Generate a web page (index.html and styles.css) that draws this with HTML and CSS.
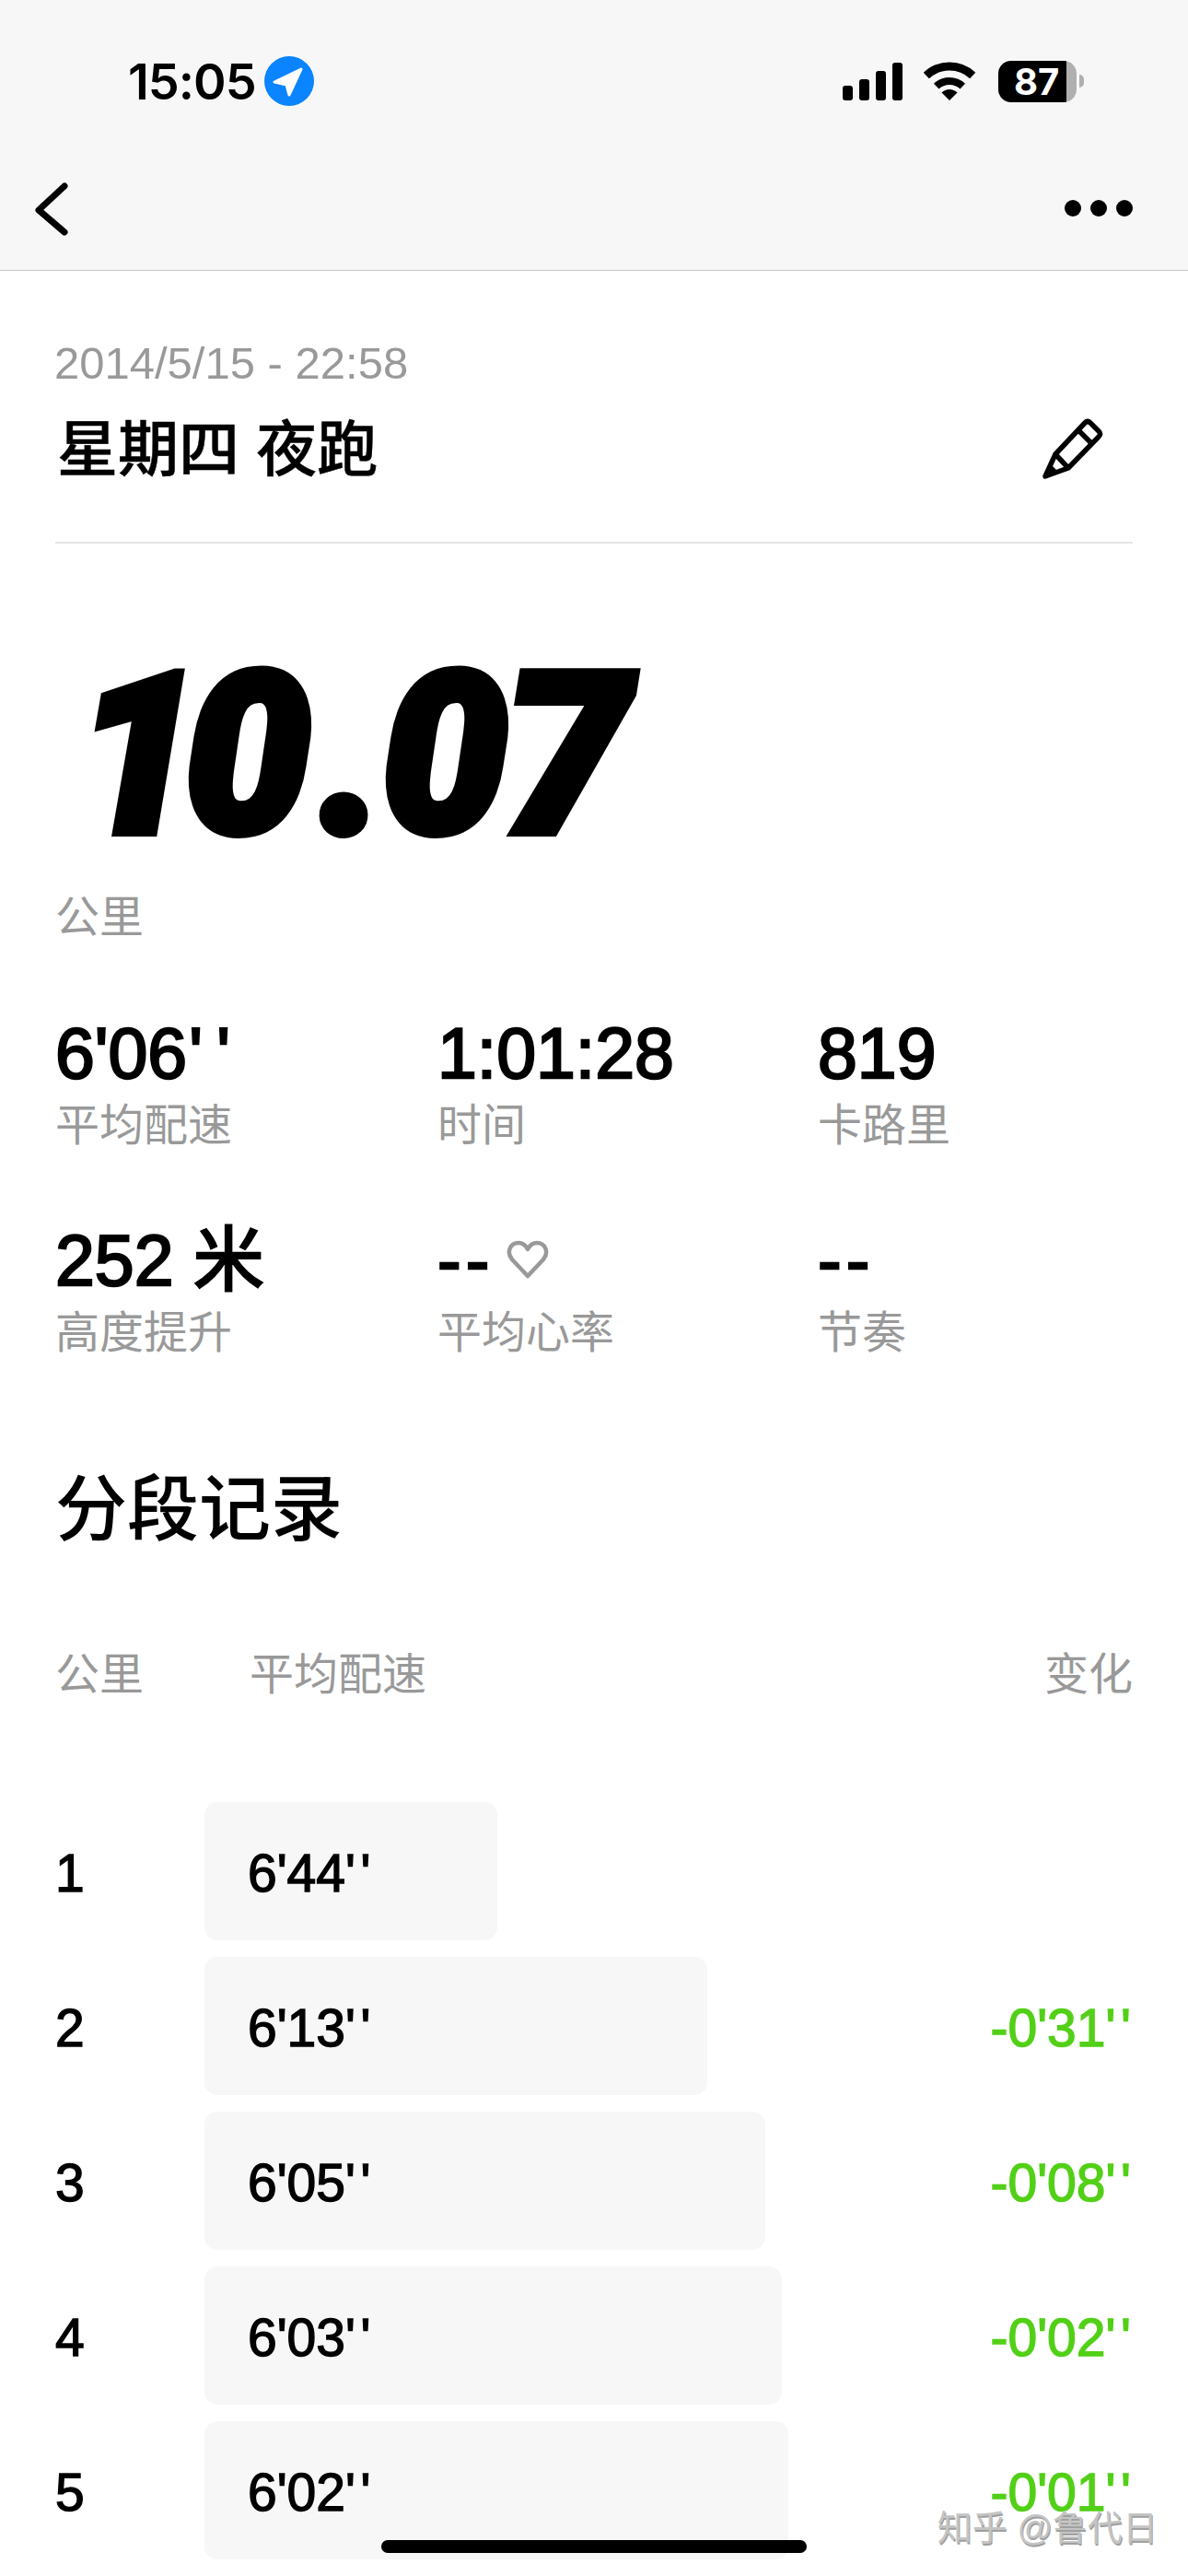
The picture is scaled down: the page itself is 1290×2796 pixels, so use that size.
FILE: index.html
```html
<!DOCTYPE html>
<html lang="zh-CN">
<head>
    <meta charset="UTF-8">
    <meta name="viewport" content="width=device-width, initial-scale=1.0">
    <title>星期四 夜跑</title>
    <link rel="stylesheet" href="styles.css">
</head>
<body>
<div class="page">

    <div class="topbar">
        <div class="status">
            <div class="status-left">
                <span class="clock">15:05</span>
                <svg class="locate" width="54" height="54" viewBox="0 0 54 54">
                    <circle cx="27" cy="27" r="27" fill="#0a84ff"/>
                    <path d="M40 14 L11 28 L24 31 L27 42 Z" fill="#fff" stroke="#fff" stroke-width="3" stroke-linejoin="round"/>
                </svg>
            </div>
            <div class="status-right">
                <svg width="65" height="41" viewBox="0 0 65 41">
                    <rect x="0" y="25" width="11" height="16" rx="3"/>
                    <rect x="18" y="18" width="11" height="23" rx="3"/>
                    <rect x="36" y="9" width="11" height="32" rx="3"/>
                    <rect x="54" y="0" width="11" height="41" rx="3"/>
                </svg>
                <svg width="58" height="44" viewBox="0 0 58 44">
                    <path d="M2.8 16 A37 37 0 0 1 53.2 16" fill="none" stroke="#000" stroke-width="9"/>
                    <path d="M13.7 27.6 A21 21 0 0 1 42.3 27.6" fill="none" stroke="#000" stroke-width="8"/>
                    <path d="M28 43 L19.5 34.5 A12 12 0 0 1 36.5 34.5 Z"/>
                </svg>
                <div class="battery">
                    <div class="battery-body">87</div>
                    <div class="battery-tip"></div>
                </div>
            </div>
        </div>
        <div class="nav">
            <svg width="44" height="60" viewBox="0 0 44 60">
                <path d="M37 6 L9 32 L37 56" fill="none" stroke="#000" stroke-width="7" stroke-linecap="round" stroke-linejoin="round"/>
            </svg>
            <div class="dots"><i></i><i></i><i></i></div>
        </div>
    </div>

    <div class="content">
        <div class="date">2014/5/15 - 22:58</div>
        <div class="title-row">
            <h1 class="title">星期四 夜跑</h1>
            <svg class="edit" width="100" height="100" viewBox="0 0 100 100">
                <path d="M25 77 L36 53 L68 19 Q71 16 74 19 L83 28 Q86 31 83 34 L50 68 Z M36 53 L50 68 M61 27 L75 41" fill="none" stroke="#000" stroke-width="5.5" stroke-linejoin="round"/>
                <path d="M25 77 L31 64 L38 71 Z"/>
            </svg>
        </div>

        <div class="distance"><span class="dist-one">1</span><span class="dist-zero">0</span>.07</div>
        <div class="distance-unit">公里</div>

        <div class="stats">
            <div class="stat">
                <div class="stat-value">6'06<span class="sec">'</span>'</div>
                <div class="label">平均配速</div>
            </div>
            <div class="stat">
                <div class="stat-value">1:01:28</div>
                <div class="label">时间</div>
            </div>
            <div class="stat">
                <div class="stat-value">819</div>
                <div class="label">卡路里</div>
            </div>
            <div class="stat">
                <div class="stat-value">252 米</div>
                <div class="label">高度提升</div>
            </div>
            <div class="stat">
                <div class="stat-value"><span class="dash">--</span><svg class="heart" width="46" height="42" viewBox="0 0 46 42">
                        <path d="M23 39 L6 21 C-1 12 5 3 13 3 C18 3 21 6 23 10 C25 6 28 3 33 3 C41 3 47 12 40 21 Z" fill="none" stroke="#999" stroke-width="4.5" stroke-linejoin="round"/>
                    </svg></div>
                <div class="label">平均心率</div>
            </div>
            <div class="stat">
                <div class="stat-value"><span class="dash">--</span></div>
                <div class="label">节奏</div>
            </div>
        </div>

        <h2 class="section-title">分段记录</h2>

        <div class="splits-head">
            <span class="head-km">公里</span>
            <span>平均配速</span>
            <span class="head-change">变化</span>
        </div>

        <div class="splits">
            <div class="split">
                <span class="split-km">1</span>
                <div class="split-bar" style="width: 318px">6'44<span class="sec">'</span>'</div>
            </div>
            <div class="split">
                <span class="split-km">2</span>
                <div class="split-bar" style="width: 546px">6'13<span class="sec">'</span>'</div>
                <span class="split-change">-0'31<span class="sec">'</span>'</span>
            </div>
            <div class="split">
                <span class="split-km">3</span>
                <div class="split-bar" style="width: 609px">6'05<span class="sec">'</span>'</div>
                <span class="split-change">-0'08<span class="sec">'</span>'</span>
            </div>
            <div class="split">
                <span class="split-km">4</span>
                <div class="split-bar" style="width: 627px">6'03<span class="sec">'</span>'</div>
                <span class="split-change">-0'02<span class="sec">'</span>'</span>
            </div>
            <div class="split">
                <span class="split-km">5</span>
                <div class="split-bar" style="width: 634px">6'02<span class="sec">'</span>'</div>
                <span class="split-change">-0'01<span class="sec">'</span>'</span>
            </div>
        </div>
    </div>

    <div class="watermark">知乎 @鲁代日</div>
    <div class="home-bar"></div>
</div>
</body>
</html>
```

FILE: styles.css
```css
body {
    margin: 0;
    background-color: #fff;
    color: #000;
    font-family: "Liberation Sans", "Noto Sans CJK SC", sans-serif;
}
.page {
    position: relative;
    height: 2796px;
    overflow: hidden;
}
.topbar {
    height: 293px;
    background-color: #f7f7f7;
    border-bottom: 1px solid #c8c8c8;
}
.status {
    display: flex;
    justify-content: space-between;
    align-items: center;
    height: 176px;
    padding: 0 113px 0 139px;
}
.status-left {
    display: flex;
    align-items: center;
    gap: 9px;
}
.clock {
    font-family: Inter, sans-serif;
    font-size: 54px;
    font-weight: 600;
    letter-spacing: -1px;
}
.status-right {
    display: flex;
    align-items: center;
    gap: 23px;
}
.battery {
    display: flex;
    align-items: center;
    gap: 3px;
}
.battery-body {
    width: 85px;
    height: 45px;
    padding-left: 17px;
    box-sizing: border-box;
    border-radius: 14px;
    background: linear-gradient(to right, #000 74px, #b0b0b0 74px);
    color: #fff;
    font-family: Inter, sans-serif;
    font-size: 40px;
    font-weight: 700;
    line-height: 45px;
}
.battery-tip {
    width: 5px;
    height: 14px;
    border-radius: 0 7px 7px 0;
    background-color: #b0b0b0;
}
.nav {
    display: flex;
    justify-content: space-between;
    align-items: center;
    height: 100px;
    padding: 0 60px 0 33px;
}
.dots {
    display: flex;
    gap: 10px;
}
.dots i {
    display: block;
    width: 18px;
    height: 18px;
    border-radius: 50%;
    background-color: #000;
}
.content {
    padding: 75px 60px 0;
}
.date {
    margin-left: -1px;
    font-size: 49px;
    line-height: 50px;
    color: #999;
}
.title-row {
    display: flex;
    justify-content: space-between;
    align-items: center;
    height: 76px;
    margin-top: 31px;
    padding-bottom: 62px;
    border-bottom: 2px solid #e5e5e5;
}
.title {
    margin: 0;
    padding-left: 2px;
    font-size: 66px;
    font-weight: 500;
    line-height: 76px;
    -webkit-text-stroke: 0.5px #000;
}
.edit {
    margin-top: 4px;
    margin-right: 20px;
}
.distance {
    margin-top: 110px;
    padding-left: 22px;
    font-family: Roboto, sans-serif;
    font-size: 243px;
    font-style: italic;
    font-weight: 900;
    line-height: 240px;
    letter-spacing: -4px;
    -webkit-text-stroke: 10px #000;
}
.dist-one {
    letter-spacing: -18px;
}
.dist-zero {
    letter-spacing: 10px;
}
.distance-unit, .label {
    font-size: 48px;
    line-height: 60px;
    color: #999;
}
.distance-unit {
    margin-top: 26px;
}
.stats {
    display: grid;
    grid-template-columns: 415px 413px 1fr;
    row-gap: 76px;
    margin-top: 77px;
}
.stat-value {
    font-size: 77px;
    line-height: 80px;
    margin-bottom: 9px;
    -webkit-text-stroke: 2.4px #000;
}
.stat-value .sec {
    margin-left: 2px;
    letter-spacing: 0.2em;
}
.dash {
    letter-spacing: 5px;
}
.heart {
    margin-left: 14px;
    vertical-align: 7px;
}
.section-title {
    margin: 117px 0 0;
    font-size: 78px;
    font-weight: 500;
    line-height: 90px;
}
.splits-head {
    display: flex;
    margin-top: 104px;
    font-size: 48px;
    line-height: 60px;
    color: #999;
}
.head-km {
    width: 211px;
}
.head-change {
    margin-left: auto;
}
.splits {
    display: flex;
    flex-direction: column;
    gap: 18px;
    margin-top: 108px;
}
.split {
    display: flex;
    align-items: center;
    height: 150px;
    font-size: 57px;
    -webkit-text-stroke: 1.4px #000;
}
.split .sec {
    letter-spacing: 0.1em;
}
.split-km {
    width: 162px;
    padding-top: 4px;
}
.split-bar {
    height: 150px;
    padding: 4px 0 0 47px;
    box-sizing: border-box;
    border-radius: 14px;
    background-color: #f7f7f7;
    line-height: 146px;
}
.split-change {
    margin-left: auto;
    margin-right: 2px;
    padding-top: 4px;
    line-height: 36px;
    color: #52d017;
    -webkit-text-stroke: 1.4px #52d017;
}
.watermark {
    position: absolute;
    right: 33px;
    bottom: 34px;
    font-size: 38px;
    line-height: 36px;
    color: #c4c4c4;
    text-shadow: 1px 2px 0 #a0a0a0;
}
.home-bar {
    position: absolute;
    left: 414px;
    bottom: 25px;
    width: 462px;
    height: 14px;
    border-radius: 7px;
    background-color: #000;
}
```
